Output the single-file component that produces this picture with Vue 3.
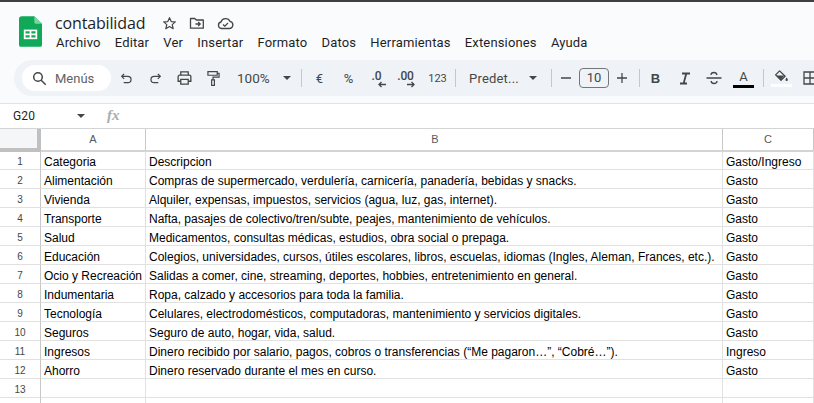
<script setup>
const menus = ['Archivo', 'Editar', 'Ver', 'Insertar', 'Formato', 'Datos', 'Herramientas', 'Extensiones', 'Ayuda']
const rows = [
  ['Categoria', 'Descripcion', 'Gasto/Ingreso'],
  ['Alimentación', 'Compras de supermercado, verdulería, carnicería, panadería, bebidas y snacks.', 'Gasto'],
  ['Vivienda', 'Alquiler, expensas, impuestos, servicios (agua, luz, gas, internet).', 'Gasto'],
  ['Transporte', 'Nafta, pasajes de colectivo/tren/subte, peajes, mantenimiento de vehículos.', 'Gasto'],
  ['Salud', 'Medicamentos, consultas médicas, estudios, obra social o prepaga.', 'Gasto'],
  ['Educación', 'Colegios, universidades, cursos, útiles escolares, libros, escuelas, idiomas (Ingles, Aleman, Frances, etc.).', 'Gasto'],
  ['Ocio y Recreación', 'Salidas a comer, cine, streaming, deportes, hobbies, entretenimiento en general.', 'Gasto'],
  ['Indumentaria', 'Ropa, calzado y accesorios para toda la familia.', 'Gasto'],
  ['Tecnología', 'Celulares, electrodomésticos, computadoras, mantenimiento y servicios digitales.', 'Gasto'],
  ['Seguros', 'Seguro de auto, hogar, vida, salud.', 'Gasto'],
  ['Ingresos', 'Dinero recibido por salario, pagos, cobros o transferencias (“Me pagaron…”, “Cobré…”).', 'Ingreso'],
  ['Ahorro', 'Dinero reservado durante el mes en curso.', 'Gasto'],
  ['', '', ''],
]
</script>

<template>
  <div class="app">
    <header class="top">
      <svg class="logo" width="23" height="31" viewBox="0 0 24 32">
        <path d="M3 0h13l8 8v22a2 2 0 0 1-2 2H2a2 2 0 0 1-2-2V3a3 3 0 0 1 3-3z" fill="#0fa958" />
        <path d="M16 0l8 8h-6a2 2 0 0 1-2-2z" fill="#7fd4a4" />
        <path d="M5 14h14v10H5z" fill="#fff" />
        <path d="M6.800 15.800h4.300v2.400H6.800zM12.900 15.800h4.300v2.400h-4.300zM6.800 19.800h4.300v2.400H6.800zM12.900 19.800h4.300v2.400h-4.300z" fill="#0fa958" />
      </svg>
      <div class="titles">
        <div class="title-row">
          <span class="doc">contabilidad</span>
          <svg class="ti first" width="15" height="15" viewBox="0 0 16 16" fill="none" stroke="#444746" stroke-width="1.300"><path d="M8 1.800l1.800 4.100 4.400.4-3.300 2.900 1 4.400L8 11.300l-3.900 2.300 1-4.400-3.300-2.900 4.400-.4z" stroke-linejoin="round" /></svg>
          <svg class="ti" width="16" height="14" viewBox="0 0 16 14" fill="none" stroke="#444746" stroke-width="1.300"><path d="M1.500 2.500h4.300l1.500 1.500h7v8.200h-12.800z" stroke-linejoin="round" /><path d="M6.500 8h4.500M9.200 6l2 2-2 2" /></svg>
          <svg class="ti" width="17" height="13" viewBox="0 0 17 13" fill="none" stroke="#444746" stroke-width="1.300"><path d="M4.500 11.500a3.300 3.300 0 0 1-.5-6.500 4.800 4.800 0 0 1 9-.6 3.600 3.600 0 0 1-.3 7.100z" stroke-linejoin="round" /><path d="M6 7.500l1.800 1.700 3.200-3.200" /></svg>
        </div>
        <nav class="menu">
          <span v-for="m in menus" :key="m">{{ m }}</span>
        </nav>
      </div>
    </header>

    <div class="toolbar">
      <div class="search">
        <svg width="15" height="15" viewBox="0 0 15 15" fill="none" stroke="#444746" stroke-width="1.500"><circle cx="6" cy="6" r="4.300" /><path d="M9.200 9.200l4.500 4.500" /></svg>
        <span>Menús</span>
      </div>
      <button class="tb">
        <svg width="13" height="13" viewBox="0 0 14 13" fill="none" stroke="#444746" stroke-width="1.300"><path d="M4.500 1.500L1.800 4.200l2.700 2.700M2 4.200h6.500a3.400 3.400 0 0 1 0 6.800H4" /></svg>
      </button>
      <button class="tb">
        <svg width="13" height="13" viewBox="0 0 14 13" fill="none" stroke="#444746" stroke-width="1.300"><path d="M9.500 1.500l2.700 2.700-2.700 2.700M12 4.200H5.500a3.400 3.400 0 0 0 0 6.800H10" /></svg>
      </button>
      <button class="tb">
        <svg width="15" height="14" viewBox="0 0 16 15" fill="none" stroke="#444746" stroke-width="1.400"><path d="M4 4.500V1h8v3.500M4 11H1.200V6a1.500 1.500 0 0 1 1.500-1.500h10.600A1.500 1.500 0 0 1 14.800 6v5H12" /><path d="M4 9h8v5H4z" /></svg>
      </button>
      <button class="tb">
        <svg width="13" height="17" viewBox="0 0 14 17" fill="none" stroke="#444746" stroke-width="1.300"><path d="M1 1h10v4H1zM11 3h2v4H6.500v3" /><path d="M5 10h3v6H5z" /></svg>
      </button>
      <span class="zoom-val">100%</span>
      <i class="caret c-zoom"></i>
      <i class="sep s-zoom"></i>
      <span class="tx w29">€</span>
      <span class="tx w29">%</span>
      <span class="tx w29 dec"><b>.0</b><svg width="10" height="7" viewBox="0 0 10 7" fill="none" stroke="#444746" stroke-width="1.300"><path d="M9 3.500H2M4.500 1L2 3.500 4.500 6" /></svg></span>
      <span class="tx w29 dec"><b>.00</b><svg width="10" height="7" viewBox="0 0 10 7" fill="none" stroke="#444746" stroke-width="1.300"><path d="M1 3.500h7M5.500 1L8 3.500 5.500 6" /></svg></span>
      <span class="tx w33 num">123</span>
      <i class="sep s-num"></i>
      <span class="pred">Predet...</span>
      <i class="caret c-pred"></i>
      <i class="sep s-pred"></i>
      <svg class="pm minus" width="10" height="2" viewBox="0 0 11 2"><path d="M0 1h11" stroke="#444746" stroke-width="1.400" /></svg>
      <span class="size">10</span>
      <svg class="pm plus" width="10" height="10" viewBox="0 0 11 11"><path d="M0 5.500h11M5.500 0v11" stroke="#444746" stroke-width="1.400" /></svg>
      <i class="sep s-plus"></i>
      <span class="tx w29 bold">B</span>
      <button class="tb">
        <svg width="12" height="13" viewBox="0 0 12 13" fill="none" stroke="#444746" stroke-width="1.800"><path d="M3 1.500h8M1 11.500h7M7.300 1.500L4.600 11.500" /></svg>
      </button>
      <button class="tb">
        <svg width="16" height="14" viewBox="0 0 16 14" fill="none" stroke="#444746" stroke-width="1.300"><path d="M0.500 7h15M11 4c-.3-1.500-1.500-2.500-3-2.500S5 2.500 5 4M5 10c.3 1.500 1.500 2.500 3 2.500s3-1 3-2.500" /></svg>
      </button>
      <span class="color-a"><em>A</em><u></u></span>
      <i class="sep s-color"></i>
      <span class="fill">
        <svg width="15" height="14" viewBox="0 0 16 14"><path d="M6 1.500l5.800 5.800-4.300 4.300-5.800-5.800z" fill="none" stroke="#444746" stroke-width="1.400" stroke-linejoin="round" /><path d="M2.500 6.500h8.500l-3.500 4.500z" fill="#444746" /><path d="M13.500 8.500c.9 1.200 1.300 1.900 1.300 2.500a1.300 1.300 0 0 1-2.600 0c0-.6.400-1.300 1.300-2.500z" fill="#444746" /></svg>
        <u></u>
      </span>
      <svg class="borders" width="14" height="14" viewBox="0 0 14 14" fill="none" stroke="#444746" stroke-width="1.300"><path d="M1 1h12v12H1zM7 1v12M1 7h12" /></svg>
    </div>

    <div class="fbar">
      <span class="ref">G20</span>
      <i class="caret c-ref"></i>
      <span class="fx">fx</span>
    </div>

    <div class="sheet">
      <div class="corner"></div>
      <div class="ch">A</div>
      <div class="ch">B</div>
      <div class="ch">C</div>
      <template v-for="(r, i) in rows" :key="i">
        <div class="rh" :class="{ first: i === 0 }">{{ i + 1 }}</div>
        <div v-for="(c, j) in r" :key="j" class="cell" :class="{ first: i === 0 }">{{ c }}</div>
      </template>
      <div class="rh"></div>
      <div class="cell"></div>
      <div class="cell"></div>
      <div class="cell"></div>
    </div>
  </div>
</template>

<style scoped>
.app {
  width: 814px;
  height: 403px;
  overflow: hidden;
  background: #f9fbfd;
  border-top: 2px solid #3c4043;
  box-sizing: border-box;
  font-family: Roboto, "Noto Sans", sans-serif;
  color: #444746;
}
.top {
  display: flex;
  height: 58px;
  padding: 14px 0 0 19px;
  box-sizing: border-box;
}
.logo { flex: none; }
.titles { margin-left: 14px; }
.title-row {
  display: flex;
  align-items: center;
  height: 14px;
}
.doc {
  font-size: 16px;
  margin-left: -1px;
  color: #1f1f1f;
  line-height: 14px;
  font-family: "Open Sans", sans-serif;
  letter-spacing: -0.15px;
}
.ti { margin-left: 12px; flex: none; }
.ti.first { margin-left: 17px; }
.menu {
  display: flex;
  gap: 14.2px;
  margin-top: 3px;
  font-size: 13px;
  color: #1f1f1f;
  line-height: 19px;
  letter-spacing: 0.15px;
}
.toolbar {
  display: flex;
  align-items: center;
  height: 36px;
  margin-left: 14px;
  padding-left: 8px;
  background: #eff3f8;
  border-radius: 18px 0 0 18px;
  white-space: nowrap;
  overflow: hidden;
}
.search {
  display: flex;
  align-items: center;
  width: 89px;
  height: 26px;
  padding-left: 10px;
  box-sizing: border-box;
  background: #fff;
  border-radius: 13px;
  flex: none;
  margin-right: 1px;
  font-size: 13px;
  color: #5f6368;
  gap: 8px;
}
.tb {
  width: 29px;
  height: 26px;
  padding: 0;
  border: 0;
  background: none;
  display: flex;
  align-items: center;
  justify-content: center;
  flex: none;
}
.zoom-val { font-size: 13.5px; margin-left: 9px; width: 41px; flex: none; }
.caret {
  display: block;
  width: 0;
  height: 0;
  border-left: 4px solid transparent;
  border-right: 4px solid transparent;
  border-top: 4px solid #444746;
  flex: none;
}
.c-zoom { margin-left: 5px; }
.sep {
  display: block;
  width: 1px;
  height: 18px;
  background: #c7c7c7;
  flex: none;
}
.s-zoom { margin: 0 3px 0 10px; }
.tx {
  text-align: center;
  font-size: 13px;
  flex: none;
  display: block;
}
.w29 { width: 29px; }
.w33 { width: 33px; }
.dec {
  position: relative;
  height: 20px;
  line-height: 16px;
  left: -1px;
}
.dec b { font-weight: 500; font-size: 12px; letter-spacing: -0.2px; }
.dec svg {
  position: absolute;
  left: 50%;
  bottom: 0;
}
.num { font-size: 11px; }
.s-num { margin: 0 13px 0 1px; }
.pred { font-size: 13px; width: 52px; flex: none; letter-spacing: 0.2px; }
.c-pred { margin-left: 8px; }
.s-pred { margin: 0 9px 0 14px; }
.pm { flex: none; }
.size {
  width: 30px;
  height: 20px;
  margin: 0 8px;
  border: 1px solid #747775;
  border-radius: 4px;
  box-sizing: border-box;
  font-size: 13px;
  line-height: 18px;
  text-align: center;
  flex: none;
}
.s-plus { margin: 0 1px 0 12px; }
.bold { font-weight: 700; font-family: "Liberation Sans", sans-serif; font-size: 13px; }
.color-a {
  width: 21px;
  margin-left: 5px;
  flex: none;
  display: flex;
  flex-direction: column;
  align-items: center;
}
.color-a em { font-style: normal; font-size: 13px; line-height: 16px; }
.color-a u { display: block; width: 21px; height: 3px; background: #000; }
.s-color { margin: 0 7px 0 9px; }
.fill {
  width: 21px;
  flex: none;
  display: flex;
  flex-direction: column;
  align-items: center;
}
.fill u { display: block; width: 21px; height: 3px; margin-top: 1px; background: #fff; }
.borders { margin-left: 11px; flex: none; }
.fbar {
  display: flex;
  align-items: center;
  height: 25px;
  margin-top: 7px;
  padding-bottom: 1px;
  box-sizing: border-box;
  background: #fff;
  border-top: 1px solid #e3e3e3;
  font-size: 12px;
  color: #1f1f1f;
}
.ref { margin-left: 13px; width: 64px; letter-spacing: 0.2px; }
.fx {
  margin-left: 22px;
  font-family: "Liberation Serif", serif;
  font-style: italic;
  font-weight: 700;
  font-size: 15px;
  color: #a8acb0;
}
.sheet {
  display: grid;
  grid-template-columns: 41px 105px 577px 91px;
  grid-template-rows: 22px repeat(14, 19px);
  background: #fff;
  border-top: 1px solid #d4d4d4;
  font-family: "Liberation Sans", Arial, sans-serif;
  font-size: 12px;
  color: #000;
}
.corner {
  background: #f5f6f7;
  border-right: 4px solid #c0c0c0;
  border-bottom: 3px solid #c0c0c0;
  box-sizing: border-box;
}
.ch {
  text-align: center;
  font-size: 11px;
  color: #575a5e;
  line-height: 21px;
  border-right: 1px solid #c7c7c7;
  border-bottom: 1px solid #d4d4d4;
  box-sizing: border-box;
}
.ch:nth-child(3) { padding-left: 2px; }
.rh {
  padding-top: 4px;
  text-align: center;
  font-size: 10px;
  color: #444746;
  line-height: 14px;
  border-right: 1px solid #c7c7c7;
  border-bottom: 1px solid #e1e1e1;
  box-sizing: border-box;
}
.cell {
  padding: 4px 0 0 3px;
  line-height: 14px;
  border-right: 1px solid #e1e1e1;
  border-bottom: 1px solid #e1e1e1;
  box-sizing: border-box;
  white-space: nowrap;
}
.rh.first {
  padding-top: 3px;
  border-top: 1px solid #c0c0c0;
}
.cell.first {
  padding-top: 3px;
  border-top: 1px solid #d4d4d4;
}
</style>
